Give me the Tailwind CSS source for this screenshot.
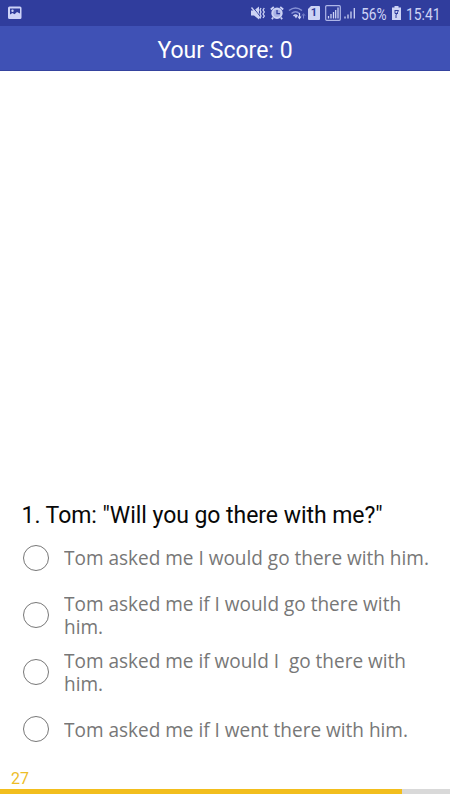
<!DOCTYPE html>
<html lang="en">
<head>
<meta charset="utf-8">
<title>Quiz</title>
<script src="https://cdn.jsdelivr.net/npm/@tailwindcss/browser@4"></script>
</head>
<body class="w-[450px] h-[800px] bg-white overflow-hidden flex flex-col font-['Roboto',sans-serif]">
<header class="h-[26px] shrink-0 bg-[#303d9d] flex items-center text-[#cdd3f5]">
  <svg class="ml-2 w-[14px] h-[14px]" viewBox="0 0 14 14"><path fill="#cdd3f8" fill-rule="evenodd" d="M1.500 .5h10.500a1.500 1.500 0 0 1 1.500 1.500v9.500a1.500 1.500 0 0 1-1.500 1.500h-10.500a1.500 1.500 0 0 1-1.500-1.500v-9.500a1.500 1.500 0 0 1 1.500-1.500zM2 2.500v6l2.500-1.500 2 1.200 2.500-2.200 3 1.500v-5zM4.500 3.500a1.200 1.200 0 1 1 0 2.400a1.200 1.200 0 0 1 0-2.400z"/></svg>
  <svg class="ml-[229px] w-[15px] h-[16px]" viewBox="0 0 15 16"><path fill="#cdd3f5" d="M0 5.500h3l5-4v13l-5-4H0z"/><path d="M1.500 1.800l8 10" stroke="#303d9d" stroke-width="1"/><path d="M.5 2.500l9 11" stroke="#cdd3f5" stroke-width="1.300"/><path d="M10 3l-1 2 1 2-1 2 1 2-1 2M13.300 3l-1.300 2 1.300 2-1.300 2 1.300 2-1.300 2" fill="none" stroke="#cdd3f5" stroke-width="1.300"/></svg>
  <svg class="ml-[4px] w-[14px] h-[14px]" viewBox="0 0 14 14"><path d="M.8 3.500l3-2.500M13.200 3.500l-3-2.500M3 11.500l-1 1.700M11 11.500l1 1.700" stroke="#cdd3f5" stroke-width="1.800"/><circle cx="7" cy="7.300" r="4.700" fill="#aab3e4" stroke="#cdd3f5" stroke-width="2"/><path d="M7 4v3.600h3" fill="none" stroke="#303d9d" stroke-width="1.300"/></svg>
  <svg class="ml-[4px] w-[18px] h-[16px]" viewBox="0 0 18 16" fill="none"><path d="M1 5.500q6.500-5 13 0M3.500 8.500q4-3.500 8 0" stroke="#8590d4" stroke-width="1.500"/><path d="M5.500 11q2-2 4 0" stroke="#cdd3f5" stroke-width="1.500"/><path d="M6.500 11h3l-1.500 2.500z" fill="#cdd3f5"/><path d="M11.500 8v5M10 11.500l1.500 2 1.500-2" stroke="#cdd3f5" stroke-width="1.200"/><path d="M15.500 13.500v-4M14 10.700l1.500-2 1.500 2" stroke="#7883cc" stroke-width="1"/></svg>
  <div class="ml-[2px] w-[12px] h-[14px] bg-[#cdd3f5] rounded-[1px] [clip-path:polygon(3px_0,100%_0,100%_100%,0_100%,0_3px)] text-[#303d9d] text-[11px] leading-[14px] font-bold text-center">1</div>
  <svg class="ml-[5px] w-[33px] h-[16px]" viewBox="0 0 33 16"><rect x=".7" y=".7" width="14.600" height="14.600" rx="1" fill="none" stroke="#aeb6e8" stroke-width="1.200"/><path d="M3.500 11v2.500M6 9v4.500M8.500 7v6.500M10.700 5v8.500M13 2.500v11M20 11.500v2M23 9.500v4M26 6.500v7M29.300 3v10.500" stroke="#cdd3f5" stroke-width="1.300"/></svg>
  <span class="ml-[3px] mt-[4px] w-[28px] text-[16px] leading-none whitespace-nowrap"><span class="inline-block origin-left scale-x-[.86]">56%</span></span>
  <svg class="ml-[3px] w-[9px] h-[14px]" viewBox="0 0 9 14"><path fill="#cdd3f5" d="M2.500 0h4v1.500h2.500v12.500h-9v-12.500h2.500z"/><path d="M2.500 4.500h4L4 9v3M3 5v2.500h3" fill="none" stroke="#303d9d" stroke-width="1"/></svg>
  <span class="ml-[5px] mt-[4px] text-[16.500px] leading-none whitespace-nowrap"><span class="inline-block origin-left scale-x-[.84]">15:41</span></span>
</header>
<div class="h-[45px] shrink-0 bg-[#3f51b5] border-b border-[#35439f] text-center text-white text-[23px] leading-[50px]"><h1>Your Score: 0</h1></div>
<main class="flex-1 flex flex-col justify-end">
  <h2 class="ml-[21.500px] h-[28px] text-[23px] leading-[30px] text-[#080808] tracking-[-.05px] whitespace-nowrap">1. Tom: "Will you go there with me?"</h2>
  <ul class="h-[228px] ml-[22.500px] grid grid-rows-4 text-[20px] leading-[23px] text-[#777] font-['Open_Sans',sans-serif] whitespace-pre">
    <li class="flex items-center"><span class="size-[26px] mr-[15.500px] rounded-full border border-[#777]"></span><span class="origin-left scale-x-95">Tom asked me I would go there with him.</span></li>
    <li class="flex items-center"><span class="size-[26px] mr-[15.500px] rounded-full border border-[#777]"></span><span class="origin-left scale-x-95 mt-px">Tom asked me if I would go there with<br>him.</span></li>
    <li class="flex items-center"><span class="size-[26px] mr-[15.500px] rounded-full border border-[#777]"></span><span class="origin-left scale-x-95 mt-px">Tom asked me if would I  go there with<br>him.</span></li>
    <li class="flex items-center"><span class="size-[26px] mr-[15.500px] rounded-full border border-[#777]"></span><span class="origin-left scale-x-95 mt-px">Tom asked me if I went there with him.</span></li>
  </ul>
</main>
<footer class="h-[43px] shrink-0 pt-[12px]">
  <div class="ml-[11px] h-[20px] text-[16px] leading-[19px] text-[#edbd28]">27</div>
  <div class="h-[5px] bg-[#d9d9d9]"><div class="h-full w-[402px] bg-[#f2be1d]"></div></div>
</footer>
</body>
</html>
